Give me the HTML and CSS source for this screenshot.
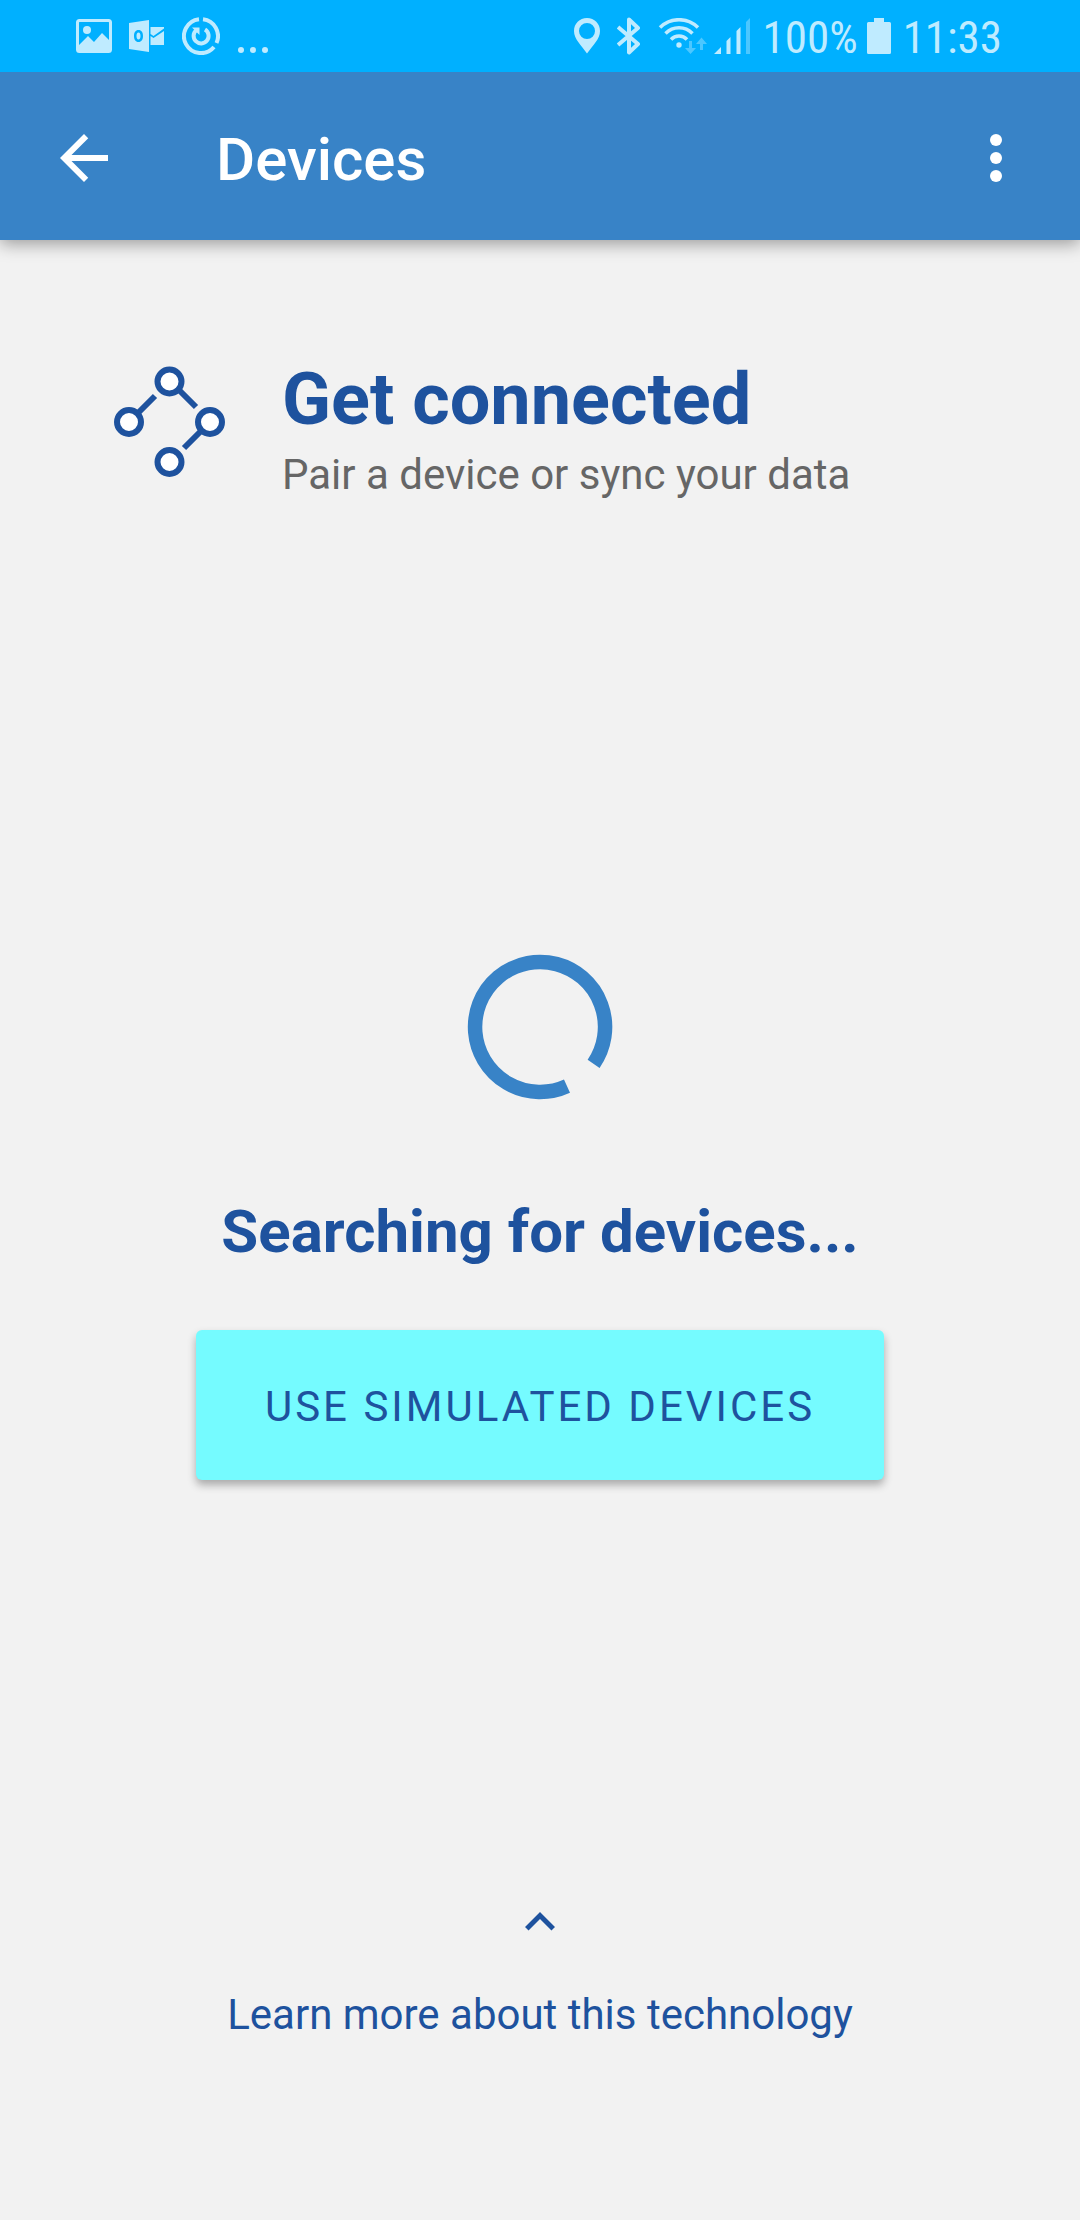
FILE: index.html
```html
<!DOCTYPE html>
<html lang="en">
<head>
<meta charset="utf-8">
<meta name="viewport" content="width=device-width, initial-scale=1">
<title>Devices</title>
<link rel="stylesheet" href="styles.css">
</head>
<body>
<div class="status-bar">
  <div class="status-group status-notifications">
    <svg width="36" height="34" viewBox="0 0 36 34" aria-hidden="true">
      <rect x="1.500" y="1.500" width="33" height="31" rx="2" fill="none" stroke="currentColor" stroke-width="3"/>
      <circle cx="11" cy="11" r="4"/>
      <path d="M3 26l9-9 6 6 8-9 8 8v10H3z"/>
    </svg>
    <svg width="36" height="34" viewBox="0 0 36 34" aria-hidden="true">
      <path fill-rule="evenodd" d="M0 4L20 1v32L0 30zM9.500 11c-3 0-4.500 2.500-4.500 6s1.500 6 4.500 6 4.500-2.500 4.500-6-1.500-6-4.500-6zm0 2.500c1.300 0 2 1.300 2 3.500s-.7 3.500-2 3.500-2-1.300-2-3.500.7-3.500 2-3.500z"/>
      <path d="M21.500 8H35v1.500L24.500 17l-3-2zM21.500 17l3 2L35 12v14H21.500z"/>
    </svg>
    <svg width="38" height="38" viewBox="0 0 38 38" fill="none" stroke="currentColor" stroke-width="4" aria-hidden="true">
      <path d="M21 2.200A17 17 0 0 1 34.500 26M32 30A17 17 0 1 1 17 2.200"/>
      <path d="M23 12.500A7.500 7.500 0 1 1 14.500 13"/>
      <path d="M10 10.500h7.500V18z" fill="currentColor" stroke="none"/>
    </svg>
    <svg width="32" height="38" viewBox="0 0 32 38" aria-hidden="true">
      <circle cx="4" cy="33" r="3"/><circle cx="16" cy="33" r="3"/><circle cx="28" cy="33" r="3"/>
    </svg>
  </div>
  <div class="status-group status-system">
    <svg width="26" height="36" viewBox="0 0 26 36" aria-hidden="true">
      <path fill-rule="evenodd" d="M13 0C5.500 0 0 5.600 0 13c0 8 7 14 13 22.500C19 27 26 21 26 13 26 5.600 20.500 0 13 0zm0 5a8 8 0 1 1 0 16 8 8 0 0 1 0-16z"/>
    </svg>
    <svg class="icon-bluetooth" width="24" height="38" viewBox="0 0 24 38" fill="none" stroke="currentColor" stroke-width="4" stroke-linejoin="round" aria-hidden="true">
      <path d="M1 10l20 17-9 8.500V2.500l9 8.500L1 28"/>
    </svg>
    <svg class="icon-wifi" width="50" height="36" viewBox="0 0 50 36" fill="none" stroke="currentColor" stroke-width="3.500" aria-hidden="true">
      <path d="M2 9.500a27 27 0 0 1 38 0M7.500 15.500a19 19 0 0 1 27 0M13 21.500a11 11 0 0 1 16 0"/>
      <circle cx="21" cy="27" r="2.700" fill="currentColor" stroke="none"/>
      <path class="dim" fill="currentColor" stroke="none" d="M31 23h3v7h4l-5.500 6-5.500-6h4zM42 32h3v-6h4l-5.500-6.500L38 26h4z"/>
    </svg>
    <svg class="icon-signal" width="36" height="36" viewBox="0 0 36 36" aria-hidden="true">
      <path d="M0 36l7-7v7zM12.500 36V23l4-4v17zM22.500 36V13l4-4v27z"/>
      <path class="dim" d="M32 36V4l4-4v36z"/>
    </svg>
    <span class="battery-level">100%</span>
    <svg class="icon-battery" width="24" height="36" viewBox="0 0 24 36" aria-hidden="true">
      <path d="M7 0h10v4h5.500A1.500 1.500 0 0 1 24 5.500v29a1.500 1.500 0 0 1-1.500 1.500h-21A1.500 1.500 0 0 1 0 34.500v-29A1.500 1.500 0 0 1 1.500 4H7z"/>
    </svg>
    <time class="clock">11:33</time>
  </div>
</div>

<header class="app-bar">
  <button class="icon-button" type="button" aria-label="Back">
    <svg width="72" height="72" viewBox="0 0 24 24"><path d="M20 11H7.830l5.590-5.590L12 4l-8 8 8 8 1.410-1.410L7.830 13H20v-2z"/></svg>
  </button>
  <h1 class="app-title">Devices</h1>
  <button class="icon-button" type="button" aria-label="More options">
    <svg width="72" height="72" viewBox="0 0 24 24"><circle cx="12" cy="6" r="2"/><circle cx="12" cy="12" r="2"/><circle cx="12" cy="18" r="2"/></svg>
  </button>
</header>

<main class="content">
  <section class="intro">
    <svg width="112" height="112" viewBox="0 0 112 112" fill="#fff" stroke="currentColor" stroke-width="6" aria-hidden="true">
      <path d="M15 56l26-26M56 15l26 26M96 56L70 82"/>
      <circle cx="55.500" cy="15.500" r="12"/><circle cx="15" cy="56" r="12"/><circle cx="96" cy="56" r="12"/><circle cx="55.500" cy="96" r="12"/>
    </svg>
    <div class="intro-text">
      <h2 class="intro-title">Get connected</h2>
      <p class="intro-subtitle">Pair a device or sync your data</p>
    </div>
  </section>

  <section class="search">
    <svg class="spinner" width="146" height="146" viewBox="-73 -73 146 146" fill="none" stroke="currentColor" stroke-width="14.500" role="img" aria-label="Searching">
      <path d="M53.600 36.800A65 65 0 1 0 27 59.100"/>
    </svg>
    <h2 class="search-title">Searching for devices...</h2>
    <button class="simulate-button" type="button">USE SIMULATED DEVICES</button>
  </section>

  <a class="learn-more" href="#technology">
    <svg width="60" height="60" viewBox="0 0 24 24" aria-hidden="true"><path d="M12 8l-6 6 1.410 1.410L12 10.830l4.590 4.580L18 14z"/></svg>
    <span>Learn more about this technology</span>
  </a>
</main>
</body>
</html>
```

FILE: styles.css
```css
* {
  box-sizing: border-box;
}

body {
  display: flex;
  flex-direction: column;
  min-height: 100vh;
  margin: 0;
  background: #f2f2f2;
  color: #1e529e;
  font-family: Roboto, sans-serif;
  font-size: 42px;
  line-height: 50px;
}

svg {
  display: block;
  flex: none;
  fill: currentColor;
}

svg[fill="none"] {
  fill: none;
}

svg[fill="#fff"] {
  fill: #fff;
}

h1,
h2,
p {
  margin: 0;
}

button {
  border: 0;
  font: inherit;
  color: inherit;
}

/* System status bar, stacked above the app bar's shadow */
.status-bar {
  position: relative;
  z-index: 1;
  display: flex;
  justify-content: space-between;
  align-items: center;
  height: 72px;
  padding: 0 78px 0 76px;
  background: #00b0ff;
  color: #bfebff;
}

.status-group {
  display: flex;
  align-items: center;
}

.status-notifications {
  gap: 17px;
}

.icon-bluetooth,
.icon-wifi {
  margin-left: 17px;
}

.icon-signal {
  margin-left: 6px;
}

.dim {
  opacity: 0.4;
}

.battery-level,
.clock {
  padding-top: 3px;
  font-family: "Roboto Condensed", "Liberation Sans Narrow", Roboto, sans-serif;
  font-size: 45px;
}

.battery-level {
  margin-left: 13px;
}

.icon-battery {
  margin: 0 12px 0 9px;
}

/* App bar */
.app-bar {
  display: flex;
  align-items: center;
  height: 168px;
  padding: 4px 48px 0;
  background: #3883c7;
  color: #fff;
  box-shadow: 0 4px 16px rgba(0, 0, 0, 0.36);
}

.icon-button {
  padding: 0;
  background: none;
}

.app-title {
  flex: 1;
  padding: 4px 0 0 96px;
  font-size: 60px;
  font-weight: 500;
  line-height: 70px;
}

/* Page content */
.content {
  display: flex;
  flex: 1;
  flex-direction: column;
  align-items: center;
  padding: 118px 48px 180px;
}

.intro {
  display: flex;
  align-self: stretch;
  gap: 56px;
  padding-left: 66px;
}

.intro > svg {
  margin-top: 8px;
}

.intro-text {
  display: grid;
  gap: 8px;
}

.intro-title {
  font-size: 72px;
  font-weight: 700;
  line-height: 84px;
}

.intro-subtitle {
  color: #666;
}

.search {
  display: flex;
  flex-direction: column;
  align-items: center;
  margin: auto 0;
  padding-top: 42px;
}

.spinner {
  color: #3883c7;
}

.search-title {
  margin: 97px 0 63px;
  font-size: 60px;
  font-weight: 700;
  line-height: 70px;
}

.simulate-button {
  height: 150px;
  padding: 4px 69px 0;
  border-radius: 6px;
  background: #75fbff;
  letter-spacing: 3px;
  box-shadow: 0 5px 8px rgba(0, 0, 0, 0.3);
}

.learn-more {
  display: flex;
  flex-direction: column;
  align-items: center;
  gap: 38px;
  color: inherit;
  text-decoration: none;
}
```
